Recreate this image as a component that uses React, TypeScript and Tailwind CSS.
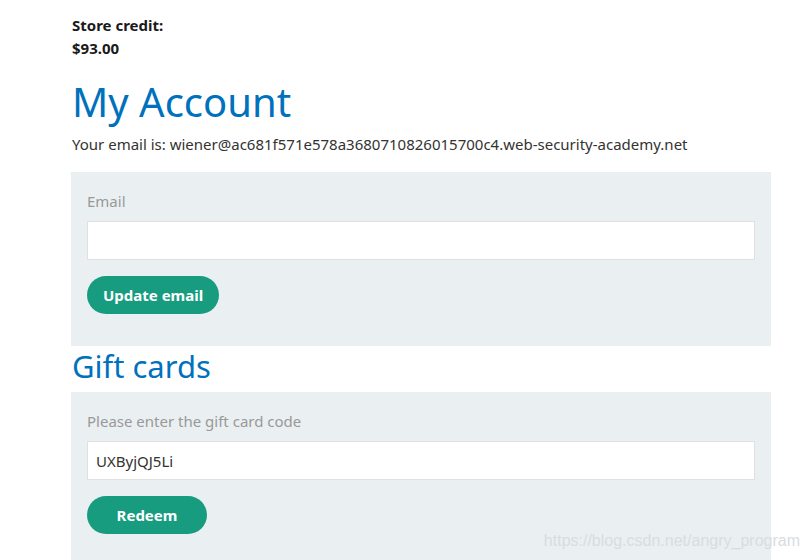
import { useState } from 'react';

export default function App() {
  const [email, setEmail] = useState('');
  const [code, setCode] = useState('UXByjQJ5Li');

  return (
    <div className="relative h-[560px] bg-white text-[#333332] font-['Noto_Sans',sans-serif] overflow-hidden">
      <div className="pl-[71px] pt-[14px] w-[771px]">
        {/* Store credit */}
        <div className="pl-px font-bold text-[15px] leading-[23px] text-[#1a1a1a]">
          <div>Store credit:</div>
          <div>$93.00</div>
        </div>

        <h1 className="mt-[18px] pl-px text-[40px] leading-[48px] text-[#0071bc]">My Account</h1>
        <p className="mt-[7px] pl-px text-[15px] leading-[22px] text-[#333332]">
          Your email is: wiener@ac681f571e578a3680710826015700c4.web-security-academy.net
        </p>

        {/* Update email */}
        <form className="mt-[17px] bg-[#eaeff2] px-4 pt-[18px] pb-[32px]" onSubmit={(e) => e.preventDefault()}>
          <label className="block text-[15px] leading-[22px] text-[#999]">Email</label>
          <input
            className="mt-[9px] block w-full h-[39px] bg-white border border-[#e0e0e0] px-2 text-[15px] outline-none"
            value={email}
            onChange={(e) => setEmail(e.target.value)}
          />
          <button className="mt-[16px] h-[38px] px-4 rounded-full bg-[#179c7f] text-white font-bold text-[15px]">
            Update email
          </button>
        </form>

        <h2 className="pl-px pb-[6px] text-[31px] leading-[40px] text-[#0071bc]">Gift cards</h2>

        {/* Gift card */}
        <form className="bg-[#eaeff2] px-4 pt-[18px] pb-[40px]" onSubmit={(e) => e.preventDefault()}>
          <label className="block text-[15px] leading-[22px] text-[#999]">Please enter the gift card code</label>
          <input
            className="mt-[9px] block w-full h-[39px] bg-white border border-[#e0e0e0] px-2 text-[15px] text-[#333332] outline-none"
            value={code}
            onChange={(e) => setCode(e.target.value)}
          />
          <button className="mt-[16px] h-[38px] w-[120px] rounded-full bg-[#179c7f] text-white font-bold text-[15px]">
            Redeem
          </button>
        </form>
      </div>

      <div className="absolute right-[8px] bottom-[9px] text-[16px] leading-[20px] text-[#d8dde0] font-['Liberation_Sans',sans-serif]">
        https://blog.csdn.net/angry_program
      </div>
    </div>
  );
}
